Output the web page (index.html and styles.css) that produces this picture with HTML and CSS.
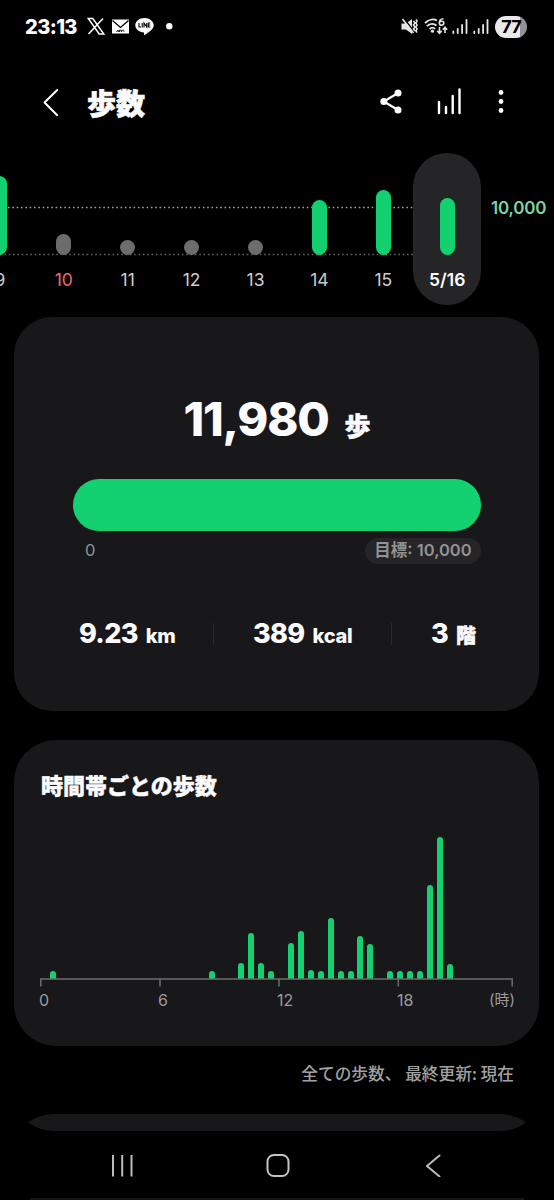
FILE: index.html
```html
<!DOCTYPE html>
<html lang="ja">
<head>
<meta charset="utf-8">
<title>歩数</title>
<link rel="stylesheet" href="styles.css">
</head>
<body>
<div class="screen">
  <header class="status">
    <span class="clock">23:13</span>
    <svg class="notices" width="92" height="20" viewBox="0 0 92 20">
      <path d="M1.200 1.500h4.600l11 15.500h-4.600zM16 1.500 1.500 17" fill="none" stroke="#fff" stroke-width="1.500"/>
      <path d="M25 2.500h17v14H25z" fill="#fff"/>
      <path d="m25.500 3.500 8 7 8-7" fill="none" stroke="#000" stroke-width="1.300"/>
      <path d="M29.500 14.800c1-2 2-1 1.500 0 1-3 2-2 1.500 0 1-3 2.500-2 2 0 1-3 2.500-2 2.500 0" fill="none" stroke="#000" stroke-width=".9"/>
      <path d="M57.500 1c5.100 0 9.200 3.300 9.200 7.300 0 4-4.700 7-9.200 9.700-.6.300-.6-.3-.5-2.500-4.800-.2-8.700-3.200-8.700-7.200C48.300 4.300 52.400 1 57.500 1z" fill="#fff"/>
      <path d="M52 6v4h2M55.200 6v4.500M57 10.500V6l2.700 4V6M63.300 6h-2v4h2M61.300 8h1.800" fill="none" stroke="#000" stroke-width="1.100"/>
      <circle cx="82.300" cy="9.200" r="3.200" fill="#fff"/>
    </svg>
    <svg class="signals" width="88" height="20" viewBox="0 0 88 20">
      <g fill="none" stroke="#e4e4e4" stroke-width="1.600">
        <path d="M.5 6.500H5l6-4.500v15l-6-4.500H.5z" fill="#e4e4e4" stroke="none"/>
        <path d="m2.500 1 11 14" stroke="#000" stroke-width="1.500"/>
        <path d="m1.500 2 11 14M12.500 4l1.500 2-1.500 2 1.500 2-1.500 2 1.500 2M15 2.500l1 1.500-1 2 1 2-1 2 1 2-1 2 1 1.500"/>
        <path d="M24 6c4-4 9-4 12-2.500M26 9.200c3-3 7-3 9.500-.5M28.500 12c2-1.800 4-1.800 5.500 0" stroke-width="1.900"/>
        <path d="M42.500 1.700c-3 .3-4.200 2-4.200 4 0 3.500 4.500 3.200 4.500.3 0-2.500-4-2.300-4.500 0" stroke-width="1.600"/>
        <path d="M38.500 10v6M36.300 13.700l2.200 2.500 2.200-2.500M44 16v-5.500M41.800 12.800l2.200-2.500 2.200 2.500" stroke-width="1.600"/>
      </g>
      <circle cx="31.500" cy="14.200" r="1.600" fill="#e4e4e4"/>
      <g stroke="#e4e4e4" stroke-width="1.800" stroke-linecap="round">
        <path d="M52.300 16v-1.500M56.700 16v-4M61.100 16V8M65.500 16V3M73.300 16v-1.500M77.700 16v-4M82.100 16V8M86.500 16V3"/>
      </g>
    </svg>
    <span class="battery">77</span>
  </header>

  <nav class="appbar">
    <svg class="back" width="18" height="30" viewBox="0 0 18 30"><path d="M15.200 3 2.500 15.500l12.700 12.700" fill="none" stroke="#fff" stroke-width="2" stroke-linecap="round" stroke-linejoin="round"/></svg>
    <h1>歩数</h1>
    <svg class="actions" width="130" height="30" viewBox="0 0 130 30">
      <g fill="#fff"><circle cx="4.800" cy="15.500" r="3.500"/><circle cx="19" cy="7" r="3.500"/><circle cx="19" cy="24" r="3.500"/></g>
      <path d="M19 7 4.800 15.500 19 24" fill="none" stroke="#fff" stroke-width="2.200"/>
      <path d="M60 16v11M67 21v6M73.700 10v17M80.500 3.500V27" stroke="#fff" stroke-width="2.400" stroke-linecap="round"/>
      <g fill="#fff"><circle cx="122" cy="6.500" r="2.400"/><circle cx="122" cy="15.500" r="2.400"/><circle cx="122" cy="24.500" r="2.400"/></g>
    </svg>
  </nav>

  <section class="week">
    <svg class="guides" width="413" height="60" viewBox="0 0 413 60">
      <path d="M8 4.500H413" stroke="#8eac9b" stroke-width="1.300" stroke-dasharray="1.600 2.730"/>
      <path d="M0 51.500H413" stroke="#626262" stroke-width="1.300" stroke-dasharray="1.600 2.730"/>
    </svg>
    <div class="days">
      <div class="day"><i class="met" style="height:79px"></i><span>9</span></div>
      <div class="day sunday"><i style="height:21px"></i><span>10</span></div>
      <div class="day"><i style="height:15px"></i><span>11</span></div>
      <div class="day"><i style="height:15px"></i><span>12</span></div>
      <div class="day"><i style="height:15px"></i><span>13</span></div>
      <div class="day"><i class="met" style="height:55px"></i><span>14</span></div>
      <div class="day"><i class="met" style="height:65px"></i><span>15</span></div>
      <div class="day selected"><i class="met" style="height:57px"></i><span>5/16</span></div>
    </div>
    <span class="target">10,000</span>
  </section>

  <section class="card summary">
    <p class="total"><b>11,980</b><small>歩</small></p>
    <div class="progress"></div>
    <div class="range"><span class="zero">0</span><span class="goal">目標: 10,000</span></div>
    <div class="stats">
      <p class="km"><b>9.23</b><small>km</small></p>
      <p class="kcal"><b>389</b><small>kcal</small></p>
      <p class="floors"><b>3</b><small>階</small></p>
    </div>
  </section>

  <section class="card hourly">
    <h2>時間帯ごとの歩数</h2>
    <div class="bars">
      <i style="grid-column:2;height:8px"></i>
      <i style="grid-column:18;height:8px"></i>
      <i style="grid-column:21;height:16px"></i>
      <i style="grid-column:22;height:46px"></i>
      <i style="grid-column:23;height:16px"></i>
      <i style="grid-column:24;height:8px"></i>
      <i style="grid-column:26;height:36px"></i>
      <i style="grid-column:27;height:48px"></i>
      <i style="grid-column:28;height:9px"></i>
      <i style="grid-column:29;height:8px"></i>
      <i style="grid-column:30;height:61px"></i>
      <i style="grid-column:31;height:8px"></i>
      <i style="grid-column:32;height:8px"></i>
      <i style="grid-column:33;height:43px"></i>
      <i style="grid-column:34;height:35px"></i>
      <i style="grid-column:36;height:8px"></i>
      <i style="grid-column:37;height:8px"></i>
      <i style="grid-column:38;height:8px"></i>
      <i style="grid-column:39;height:8px"></i>
      <i style="grid-column:40;height:94px"></i>
      <i style="grid-column:41;height:142px"></i>
      <i style="grid-column:42;height:15px"></i>
    </div>
    <svg class="axis" width="473" height="9" viewBox="0 0 473 9"><path d="M.8 8.500V1h471.400v7.500M120 1v7.500M239 1v7.500M358.300 1v7.500" fill="none" stroke="#6c6c6e" stroke-width="1.500"/></svg>
    <div class="hours"><span>0</span><span>6</span><span>12</span><span>18</span><span class="unit">(時)</span></div>
  </section>

  <p class="updated">全ての歩数、&nbsp;最終更新: 現在</p>
  <svg class="next-card" width="498" height="17" viewBox="0 0 498 17"><path d="M0 8.500Q12 0 26 0h446q14 0 26 8.500-12 8.500-26 8.500H26Q12 17 0 8.500z" fill="#18181a"/></svg>

  <footer class="navkeys">
    <svg width="24" height="24" viewBox="0 0 24 24"><path d="M3 2v21.500M12.200 2v21.500M21.500 2v21.500" stroke="#bbb" stroke-width="2"/></svg>
    <svg width="24" height="24" viewBox="0 0 24 24"><rect x="1.500" y="2" width="21" height="21" rx="6.500" fill="none" stroke="#c4c4c4" stroke-width="2"/></svg>
    <svg width="24" height="24" viewBox="0 0 24 24"><path d="M18.500 2.500 6 13l12.500 10.500" fill="none" stroke="#bbb" stroke-width="2" stroke-linecap="round" stroke-linejoin="round"/></svg>
  </footer>
  <div class="edge"></div>
</div>
</body>
</html>
```
FILE: styles.css
```css
* { box-sizing: border-box; margin: 0; padding: 0; }
body { background: #000; color: #fcfcff; font-family: Inter, "Noto Sans CJK JP", sans-serif; }
svg { display: block; flex: none; }
i { display: block; }
.screen { width: 554px; height: 1200px; overflow: hidden; display: flex; flex-direction: column; }

.status { height: 54px; padding-left: 25px; display: flex; align-items: center; flex: none; white-space: nowrap; }
.clock { width: 62px; font: 800 20px/24px Inter, sans-serif; letter-spacing: -.6px; }
.notices { margin-top: -1px; }
.signals { margin-left: 222px; margin-right: 6px; }
.battery { width: 32px; height: 22px; margin-top: -1px; border-radius: 11px; background: linear-gradient(90deg, #e9e9e9 78%, #929292 78%); color: #000; font: 700 18px/22px Inter, sans-serif; text-align: center; letter-spacing: -1px; }

.appbar { height: 96px; padding-left: 42px; display: flex; align-items: center; flex: none; }
.back { margin-top: -1px; }
h1 { width: 320px; padding-left: 27px; font: 900 29px/40px "Noto Sans CJK JP", sans-serif; -webkit-text-stroke: .7px; white-space: nowrap; flex: none; }
.actions { margin: -2px 0 0 -1px; }

.week { height: 167px; padding-top: 3px; display: flex; flex: none; position: relative; }
.guides { position: absolute; left: 0; top: 53px; }
.days { width: 513px; margin-left: -32px; display: flex; flex: none; position: relative; }
.day { width: 63.900px; height: 152px; display: flex; flex-direction: column; justify-content: flex-end; align-items: center; flex: none; font-size: 17.500px; line-height: 24px; color: #ccc; }
.day i { width: 15px; border-radius: 8px; background: #6c6c6e; }
.day span { margin: 13px 0 13px; }
.day .met { background: #13d170; }
.sunday { color: #e86e68; }
.selected { width: 68px; margin-left: -2px; border-radius: 34px; background: #252527; color: #fff; font-weight: 600; }
.target { margin: 43px 0 0 10px; font: 600 17px/24px Inter, sans-serif; letter-spacing: -.2px; color: #7ed3a3; }

.card { width: 525px; margin-left: 14px; background: #18181a; flex: none; }
.summary { height: 394px; padding: 69px 58px 0 59px; border-radius: 38px; display: flex; flex-direction: column; }
.total { height: 66px; display: flex; align-items: baseline; justify-content: center; font: 800 47px/66px Inter, sans-serif; white-space: nowrap; }
.total b { font-weight: 800; letter-spacing: -1.200px; }
.total small { margin-left: 16px; font: 900 26px/36px "Noto Sans CJK JP", sans-serif; -webkit-text-stroke: .5px; }
.progress { height: 52px; margin-top: 27px; border-radius: 26px; background: #13d170; }
.range { height: 26px; margin-top: 7px; padding-left: 12px; display: flex; justify-content: space-between; font-size: 16.500px; line-height: 25px; color: #929294; }
.goal { width: 116px; border-radius: 13px; background: #252527; text-align: center; font-weight: 600; font-size: 16.500px; line-height: 25px; white-space: nowrap; }
.stats { height: 36px; margin-top: 53px; display: flex; white-space: nowrap; }
.stats p { display: flex; align-items: baseline; line-height: 34px; }
.stats b { font-size: 27px; font-weight: 800; letter-spacing: -.7px; }
.stats small { margin-left: 8px; font: 800 20px/34px Inter, "Noto Sans CJK JP", sans-serif; letter-spacing: -.2px; }
.stats .floors small { -webkit-text-stroke: .5px; }
.km { width: 141px; padding-left: 6px; }
.kcal { width: 178px; padding-left: 39px; }
.floors { padding-left: 39px; }
.km, .kcal { background: linear-gradient(#2b2b2d, #2b2b2d) right 6px / 1px 22px no-repeat; }

.hourly { height: 306px; margin-top: 29px; padding: 28px 0 0 25px; border-radius: 42px; }
h2 { padding-left: 2px; font: 900 22px/32px "Noto Sans CJK JP", sans-serif; -webkit-text-stroke: .4px; }
.bars { width: 471px; height: 179px; margin-left: -1px; display: grid; grid-template-columns: repeat(47, 9.930px); align-items: end; justify-items: center; }
.bars i { grid-row: 1; width: 6px; border-radius: 3px 3px 0 0; background: #13d170; }
.axis { margin-top: -1px; margin-left: .5px; }
.hours { height: 26px; align-items: center; display: grid; grid-template-columns: 119px 119px 120px 92px auto; font-size: 16px; line-height: 26px; color: #9b9b9d; }
.unit { font-size: 15px; white-space: nowrap; }
.updated { height: 26px; margin: 14px 40px 0 0; text-align: right; font: 500 16.700px/26px "Noto Sans CJK JP", sans-serif; color: #a1a1a3; flex: none; }
.next-card { margin: 28px 0 0 28px; }
.navkeys { height: 67px; padding: 22px 109px 0 110px; display: flex; justify-content: space-between; flex: none; }
.edge { width: 494px; height: 2px; margin-left: 30px; background: #161618; flex: none; }
```
